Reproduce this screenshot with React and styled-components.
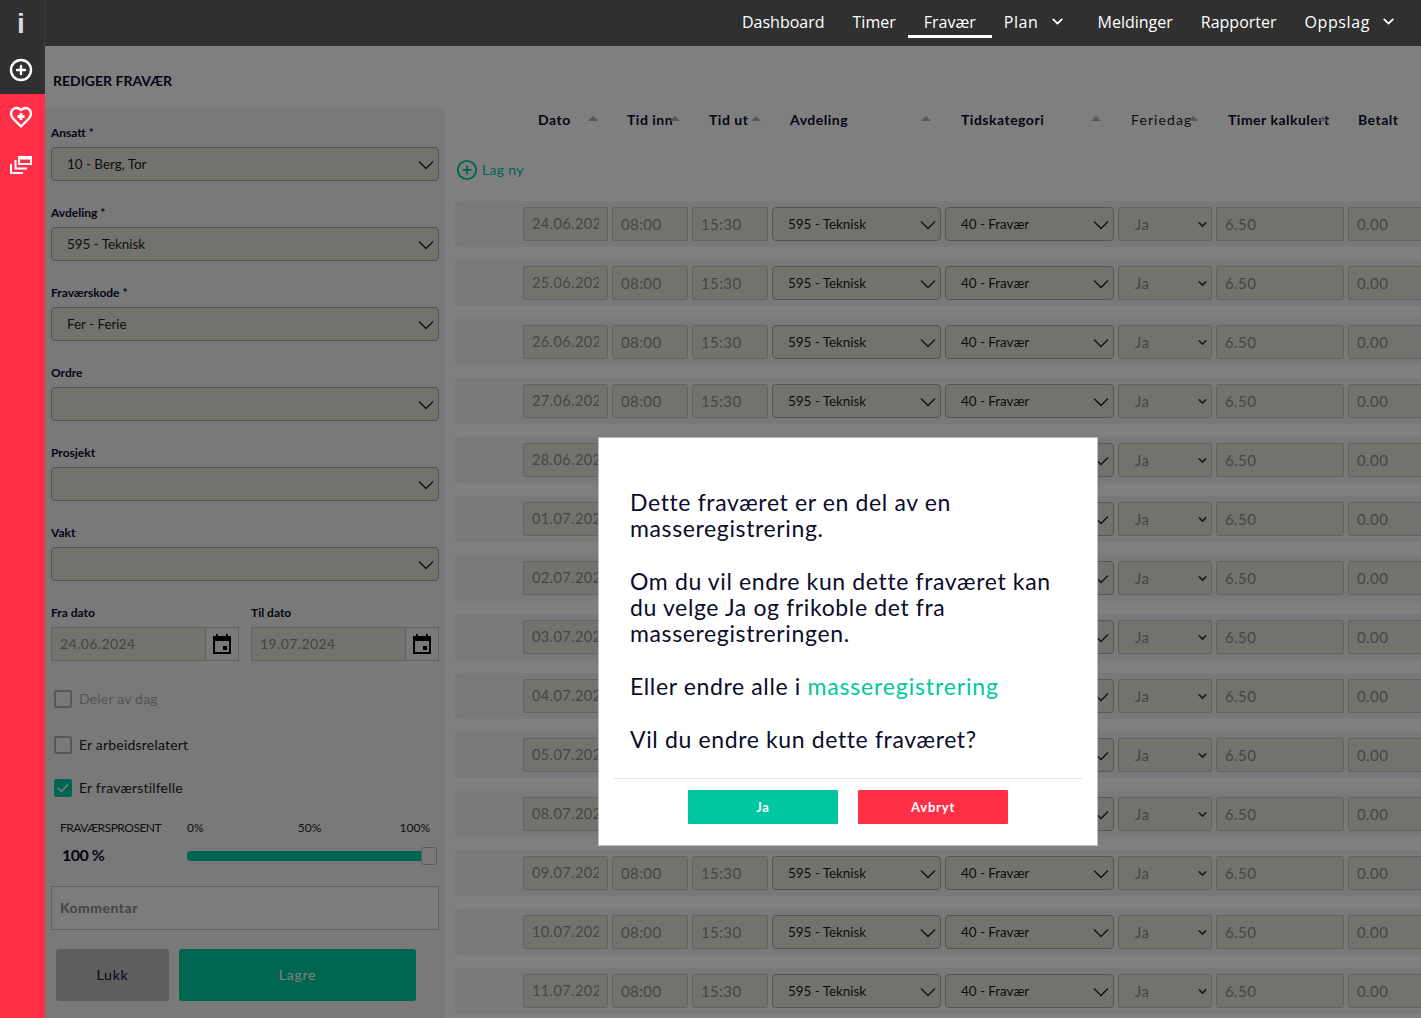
import React from "react";
import styled, { createGlobalStyle } from "styled-components";
import { ChevronDown, CirclePlus } from "lucide-react";

const GlobalStyle = createGlobalStyle`
  html, body { margin: 0; padding: 0; height: 100%; overflow: hidden; background: #fff; }
  body { font-family: Lato, "Noto Sans", sans-serif; color: #0b0b2b; }
  * { box-sizing: border-box; }
`;

const Shell = styled.div`
  display: flex;
  height: 1018px;
  width: 1421px;
  overflow: hidden;
  position: relative;
`;

const Sidebar = styled.aside`
  width: 45px;
  flex: none;
  background: #ff2f48;
  display: flex;
  flex-direction: column;
  align-items: center;
  position: relative;
  z-index: 3;
`;

const SideDark = styled.div`
  width: 100%;
  height: 94px;
  background: #303030;
  display: flex;
  flex-direction: column;
  align-items: center;
`;

const InfoMark = styled.div`
  height: 46px;
  width: 100%;
  border-right: 1px solid #3c3c3c;
  display: flex;
  align-items: center;
  justify-content: center;
  font: 700 28px/1 "Liberation Sans", sans-serif;
  color: #d8d8e4;
  padding: 2px 2px 0 0;
`;

const SideIcon = styled.div`
  height: ${(p) => p.$h}px;
  display: flex;
  align-items: center;
  justify-content: center;
  color: #fff;
  padding-right: 3px;
`;

const Main = styled.div`
  flex: 1;
  min-width: 0;
  display: flex;
  flex-direction: column;
`;

const TopBar = styled.nav`
  height: 46px;
  flex: none;
  background: #303030;
  display: flex;
  justify-content: flex-end;
  padding-right: 24px;
  position: relative;
  z-index: 3;
  font: 400 16px/1 "Open Sans", sans-serif;
  color: #fff;
`;

const NavItem = styled.div`
  display: flex;
  align-items: center;
  height: 38px;
  padding: 8px ${(p) => (p.$active ? 16 : 14)}px 0;
  margin-left: ${(p) => (p.$active ? -2 : 0)}px;
  border-bottom: 3px solid ${(p) => (p.$active ? "#fff" : "transparent")};
`;

const NavMenu = styled(NavItem)`
  padding: 8px 18px 0 12px;
  gap: 10px;
  letter-spacing: 0.6px;
  &:last-child { padding: 8px 0 0 14px; gap: 10px; }
`;

const Body = styled.div`
  flex: 1;
  display: flex;
  min-height: 0;
`;

const FormColumn = styled.section`
  width: 400px;
  flex: none;
  display: flex;
  flex-direction: column;
`;

const Title = styled.h2`
  margin: 0;
  height: 61px;
  padding: 28px 0 0 8px;
  font-size: 14px;
  line-height: 14px;
  font-weight: 700;
`;

const Panel = styled.div`
  flex: 1;
  background: #f2f2f2;
  padding: 19px 6px 0;
`;

const Field = styled.div`
  margin-bottom: 25px;
`;

const Label = styled.div`
  font-size: 12px;
  line-height: 14px;
  font-weight: 700;
  margin-bottom: 7px;
`;

const SelectBox = styled.div`
  height: 34px;
  width: 100%;
  border: 1px solid #a8a8a8;
  border-radius: 4px;
  background: #e6e6dc;
  display: flex;
  align-items: center;
  justify-content: space-between;
  padding: 0 0 1px 15px;
  font-size: 13.5px;
  letter-spacing: -0.05px;
  color: #1a1a1a;
  white-space: nowrap;
`;

const DateRow = styled.div`
  display: flex;
  gap: 12px;
`;

const DateField = styled.div`
  flex: 1;
`;

const DateGroup = styled.div`
  display: flex;
  height: 34px;
`;

const DateInput = styled.div`
  flex: 1;
  background: #e6e6dc;
  border: 1px solid #c4c4c4;
  border-right: 0;
  display: flex;
  align-items: center;
  padding: 0 0 2px 8px;
  font-size: 14px;
  letter-spacing: 0.4px;
  color: #888;
`;

const DateAddon = styled.div`
  width: 34px;
  border: 1px solid #c4c4c4;
  background: #f2f2f2;
  display: flex;
  align-items: center;
  justify-content: center;
`;

const CheckRow = styled.label`
  display: flex;
  align-items: center;
  gap: 7px;
  height: 18px;
  margin: ${(p) => p.$top}px 0 0 3px;
  font-size: 14px;
  letter-spacing: 0.2px;
  color: ${(p) => (p.$muted ? "#a8a8a8" : "#222")};
`;

const CheckText = styled.span`
  margin-top: -2px;
`;

const Box = styled.span`
  width: 18px;
  height: 18px;
  border-radius: 2px;
  border: 2px solid ${(p) => (p.$on ? "#00cca4" : "#b0b0b0")};
  background: ${(p) => (p.$on ? "#00cca4" : "transparent")};
  display: flex;
  align-items: center;
  justify-content: center;
`;

const PercentGrid = styled.div`
  display: grid;
  grid-template-columns: 127px 1fr;
  padding-left: 9px;
  margin-top: 24px;
  align-items: center;
`;

const PercentLabel = styled.div`
  font-size: 12px;
  line-height: 14px;
  color: #222;
  letter-spacing: -0.5px;
`;

const Scale = styled.div`
  display: flex;
  justify-content: space-between;
  padding-right: 9px;
  font-size: 12px;
  line-height: 14px;
  color: #222;
  span:nth-child(2) { margin-left: 16px; }
`;

const PercentValue = styled.div`
  font-size: 16px;
  font-weight: 700;
  letter-spacing: -0.5px;
  padding-left: 2px;
  margin-top: 9px;
`;

const Slider = styled.div`
  display: flex;
  align-items: center;
  height: 18px;
  margin: 12px 2px 0 0;
`;

const Track = styled.div`
  flex: 1;
  height: 10px;
  background: #00cca4;
  border-radius: 4px 0 0 4px;
`;

const Knob = styled.div`
  width: 16px;
  height: 18px;
  background: #f2f2f2;
  border: 1px solid #b4b4b4;
  border-radius: 3px;
`;

const Comment = styled.div`
  height: 44px;
  margin-top: 21px;
  border: 1px solid #c4c4c4;
  background: #f8f8f8;
  display: flex;
  align-items: center;
  padding: 0 0 2px 8px;
  font-size: 14px;
  font-weight: 700;
  letter-spacing: 0.5px;
  color: #888;
`;

const Actions = styled.div`
  display: flex;
  gap: 10px;
  margin: 19px 0 0 5px;
`;

const BigButton = styled.button`
  width: ${(p) => p.$w}px;
  height: 52px;
  border: 0;
  border-radius: 3px;
  padding: 0 0 2px;
  background: ${(p) => p.$bg};
  color: ${(p) => p.$fg};
  font: 400 14px Lato, sans-serif;
  letter-spacing: 0.8px;
`;

const TableColumn = styled.section`
  flex: 1;
  min-width: 0;
  padding: 64px 0 0 10px;
  overflow: hidden;
`;

const HeaderRow = styled.div`
  display: grid;
  grid-template-columns: 89px 82px 81px 171px 170px 97px 130px 70px;
  padding: 0 0 2px 83px;
  height: 20px;
  align-items: center;
`;

const HeaderCell = styled.div`
  position: relative;
  font-size: 14px;
  font-weight: ${(p) => (p.$light ? 400 : 700)};
  letter-spacing: ${(p) => (p.$light ? 1.1 : 0.5)}px;
  white-space: nowrap;
  color: ${(p) => (p.$light ? "#222" : "#0b0b2b")};
`;

const SortMark = styled.span`
  position: absolute;
  left: ${(p) => p.$left}px;
  top: 5px;
  width: 0;
  height: 0;
  border-left: 5px solid transparent;
  border-right: 5px solid transparent;
  border-bottom: 5px solid #b0b0b0;
`;

const NewLink = styled.div`
  display: flex;
  align-items: center;
  gap: 4px;
  height: 20px;
  margin: 30px 0 21px 1px;
  font-size: 14px;
  letter-spacing: 0.3px;
  color: #00cca4;
  span { margin-top: -2px; }
`;

const Rows = styled.div`
  display: flex;
  flex-direction: column;
  gap: 13px;
`;

const Row = styled.div`
  height: 46px;
  width: 1100px;
  flex: none;
  background: #f2f2f2;
  border-radius: 3px;
  display: grid;
  grid-template-columns: 85px 76px 76px 169px 169px 94px 128px 100px;
  gap: 4px;
  align-items: center;
  padding-left: 68px;
`;

const Cell = styled.div`
  height: 34px;
  border: 1px solid #c4c4c4;
  border-radius: 2px;
  background: #e6e6dc;
  display: flex;
  align-items: center;
  padding: 0 8px 1px;
  font-size: 15px;
  letter-spacing: 0.4px;
  color: #8c8c8c;
  white-space: nowrap;
`;

const CellText = styled.span`
  overflow: hidden;
  min-width: 0;
  font-size: 14.5px;
`;

const SmallSelect = styled(Cell)`
  justify-content: space-between;
  padding: 0 2px 1px 16px;
  svg { color: #333; flex: none; margin-top: 2px; }
`;

const Overlay = styled.div`
  position: absolute;
  inset: 0;
  z-index: 2;
  background: rgba(0, 0, 0, 0.5);
`;

const Modal = styled.div`
  position: absolute;
  z-index: 4;
  left: 598px;
  top: 437px;
  width: 500px;
  height: 409px;
  background: #fff;
  border: 1px solid #bdbdbd;
  padding: 51px 15px 0;
`;

const ModalText = styled.p`
  margin: 0;
  padding: 0 16px;
  height: 276px;
  font-size: 23px;
  line-height: 26.3px;
  letter-spacing: 0.63px;
  color: #0b0b2b;
  a { color: #00c7a0; letter-spacing: 0.85px; }
`;

const ModalFooter = styled.div`
  border-top: 1px solid #e4e4e4;
  margin-top: 13px;
  padding-top: 11px;
  display: flex;
  justify-content: center;
  gap: 20px;
`;

const ModalButton = styled.button`
  width: 150px;
  height: 34px;
  border: 0;
  border-radius: 1px;
  background: ${(p) => p.$bg};
  color: #fff;
  font: 700 13px Lato, sans-serif;
  letter-spacing: 0.8px;
`;

const Thin = () => (
  <svg width="22" height="16" viewBox="0 0 22 16" fill="none" stroke="#1f1f1f" strokeWidth="1.3" style={{ flex: "none" }}>
    <path d="M3 5.500l7 7 7-7" />
  </svg>
);

const Calendar = () => (
  <svg width="18" height="20" viewBox="0 0 18 20">
    <path d="M3 0h2v3H3zM13 0h2v3h-2z" fill="#000" />
    <rect x="1" y="3" width="16" height="16" fill="none" stroke="#000" strokeWidth="2" />
    <rect x="1" y="3" width="16" height="4" fill="#000" />
    <rect x="10" y="12" width="4" height="4" fill="#000" />
  </svg>
);

const HeartIcon = () => (
  <svg width="24" height="24" viewBox="0 0 24 24" fill="none" stroke="#fff" strokeWidth="2.4" strokeLinejoin="round">
    <path d="M19.5 14c1.5-1.5 2.5-3.2 2.5-5.5A5.5 5.5 0 0 0 16.5 3c-1.8 0-3 .5-4.5 2-1.5-1.5-2.7-2-4.5-2A5.5 5.5 0 0 0 2 8.5c0 2.3 1 4 2.500 5.5l7.500 7.500Z" />
    <path d="M12 8v7M8.500 11.500h7" strokeWidth="2.800" />
  </svg>
);

const WindowsIcon = () => (
  <svg width="22" height="18" viewBox="0 0 22 18" fill="none" stroke="#fff" strokeWidth="2">
    <rect x="9" y="1" width="12" height="7" />
    <path d="M5.500 4v8.500H17" />
    <path d="M1 8v9h12" />
    <path d="M9 2h12" strokeWidth="3" />
  </svg>
);

const dates = [
  "24.06.2024", "25.06.2024", "26.06.2024", "27.06.2024", "28.06.2024",
  "01.07.2024", "02.07.2024", "03.07.2024", "04.07.2024", "05.07.2024",
  "08.07.2024", "09.07.2024", "10.07.2024", "11.07.2024",
];

const fields = [
  ["Ansatt *", "10 - Berg, Tor"],
  ["Avdeling *", "595 - Teknisk"],
  ["Fraværskode *", "Fer - Ferie"],
  ["Ordre", ""],
  ["Prosjekt", ""],
  ["Vakt", ""],
];

const headers = [
  ["Dato", 50],
  ["Tid inn", 43],
  ["Tid ut", 42],
  ["Avdeling", 131],
  ["Tidskategori", 130],
  ["Feriedag", 57, true],
  ["Timer kalkulert", 90],
  ["Betalt"],
];

export default function App() {
  return (
    <Shell>
      <GlobalStyle />
      <Sidebar>
        <SideDark>
          <InfoMark>i</InfoMark>
          <SideIcon $h={48}><CirclePlus size={24} strokeWidth={2.4} /></SideIcon>
        </SideDark>
        <SideIcon $h={46}><HeartIcon /></SideIcon>
        <SideIcon $h={50}><WindowsIcon /></SideIcon>
      </Sidebar>
      <Main>
        <TopBar>
          <NavItem>Dashboard</NavItem>
          <NavItem>Timer</NavItem>
          <NavItem $active>Fravær</NavItem>
          <NavMenu>Plan <ChevronDown size={17} strokeWidth={2.6} /></NavMenu>
          <NavItem>Meldinger</NavItem>
          <NavItem>Rapporter</NavItem>
          <NavMenu>Oppslag <ChevronDown size={17} strokeWidth={2.6} /></NavMenu>
        </TopBar>
        <Body>
          <FormColumn>
            <Title>REDIGER FRAVÆR</Title>
            <Panel>
              {fields.map(([label, value]) => (
                <Field key={label}>
                  <Label>{label}</Label>
                  <SelectBox>{value}<span /><Thin /></SelectBox>
                </Field>
              ))}
              <DateRow>
                <DateField>
                  <Label>Fra dato</Label>
                  <DateGroup>
                    <DateInput>24.06.2024</DateInput>
                    <DateAddon><Calendar /></DateAddon>
                  </DateGroup>
                </DateField>
                <DateField>
                  <Label>Til dato</Label>
                  <DateGroup>
                    <DateInput>19.07.2024</DateInput>
                    <DateAddon><Calendar /></DateAddon>
                  </DateGroup>
                </DateField>
              </DateRow>
              <CheckRow $top={29} $muted><Box /><CheckText>Deler av dag</CheckText></CheckRow>
              <CheckRow $top={28}><Box /><CheckText>Er arbeidsrelatert</CheckText></CheckRow>
              <CheckRow $top={25}>
                <Box $on>
                  <svg width="14" height="14" viewBox="0 0 14 14" fill="none" stroke="#fff" strokeWidth="1.5"><path d="M2 7l3.500 3.500L12 3.500" /></svg>
                </Box>
                <CheckText>Er fraværstilfelle</CheckText>
              </CheckRow>
              <PercentGrid>
                <PercentLabel>FRAVÆRSPROSENT</PercentLabel>
                <Scale><span>0%</span><span>50%</span><span>100%</span></Scale>
                <PercentValue>100 %</PercentValue>
                <Slider><Track /><Knob /></Slider>
              </PercentGrid>
              <Comment>Kommentar</Comment>
              <Actions>
                <BigButton $w={113} $bg="#bcbcbc" $fg="#0b0b2b">Lukk</BigButton>
                <BigButton $w={237} $bg="#00cca4" $fg="#fff">Lagre</BigButton>
              </Actions>
            </Panel>
          </FormColumn>
          <TableColumn>
            <HeaderRow>
              {headers.map(([name, left, light]) => (
                <HeaderCell key={name} $light={light}>
                  {name}
                  {left && <SortMark $left={left} />}
                </HeaderCell>
              ))}
            </HeaderRow>
            <NewLink>
              <CirclePlus size={22} strokeWidth={2} />
              <span>Lag ny</span>
            </NewLink>
            <Rows>
              {dates.map((d) => (
                <Row key={d}>
                  <Cell><CellText>{d}</CellText></Cell>
                  <Cell>08:00</Cell>
                  <Cell>15:30</Cell>
                  <SelectBox>595 - Teknisk<span /><Thin /></SelectBox>
                  <SelectBox>40 - Fravær<span /><Thin /></SelectBox>
                  <SmallSelect>Ja<ChevronDown size={13} strokeWidth={3} /></SmallSelect>
                  <Cell>6.50</Cell>
                  <Cell>0.00</Cell>
                </Row>
              ))}
            </Rows>
          </TableColumn>
        </Body>
      </Main>
      <Overlay />
      <Modal>
        <ModalText>
          Dette fraværet er en del av en masseregistrering.
          <br /><br />
          Om du vil endre kun dette fraværet kan du velge Ja og frikoble det fra masseregistreringen.
          <br /><br />
          Eller endre alle i <a>masseregistrering</a>
          <br /><br />
          Vil du endre kun dette fraværet?
        </ModalText>
        <ModalFooter>
          <ModalButton $bg="#00c7a0">Ja</ModalButton>
          <ModalButton $bg="#ff2f48">Avbryt</ModalButton>
        </ModalFooter>
      </Modal>
    </Shell>
  );
}
